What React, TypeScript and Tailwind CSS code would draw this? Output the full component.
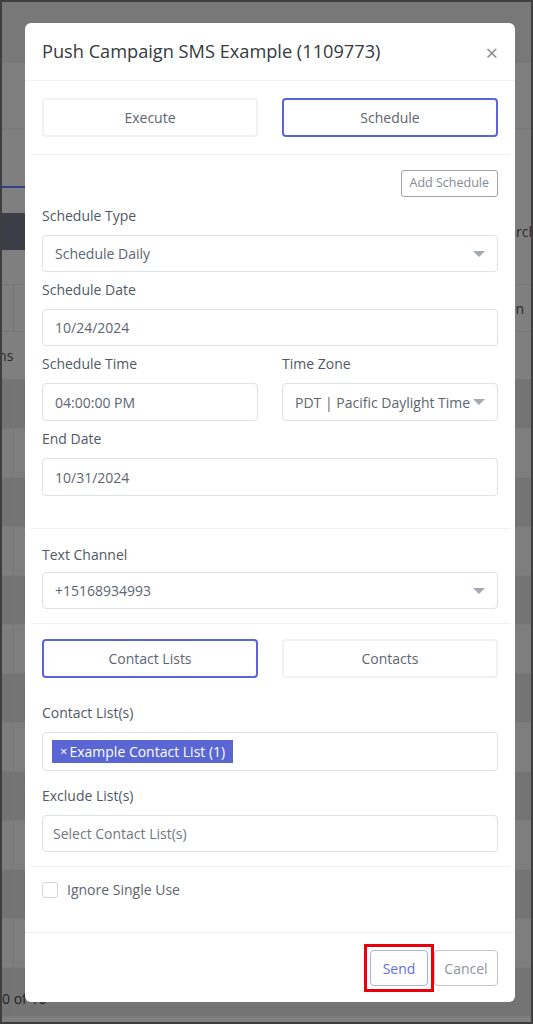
import type React from "react";

const Caret: React.FC = () => (
	<svg width="12" height="6" viewBox="0 0 12 6" className="shrink-0">
		<path d="M0 0h12L6 6z" fill="#a3a9b0" />
	</svg>
);

const Field: React.FC<{
	label: string;
	className?: string;
	tight?: boolean;
	children: React.ReactNode;
}> = ({ label, className, tight, children }) => (
	<div className={className}>
		<div
			className={
				tight
					? "mb-[7px] text-[14px] leading-5 text-[#4f5964]"
					: "mb-[9px] text-[14px] leading-5 text-[#4f5964]"
			}
		>
			{label}
		</div>
		{children}
	</div>
);

const Box: React.FC<{ caret?: boolean; tall?: boolean; children: React.ReactNode }> = ({
	caret,
	tall,
	children,
}) => (
	<div
		className={
			tall
				? "flex h-[38px] items-center justify-between rounded-[4px] border border-[#dee2e6] px-[12px]"
				: "flex h-[37px] items-center justify-between rounded-[4px] border border-[#dee2e6] px-[12px]"
		}
	>
		<span className="text-[14px] text-[#5c6570]">{children}</span>
		{caret && <Caret />}
	</div>
);

const Tab: React.FC<{ active?: boolean; label: string }> = ({ active, label }) => (
	<div
		className={
			active
				? "flex h-[39px] items-center justify-center rounded-[4px] border-2 border-[#5a66d6] text-[14px] text-[#5c6570]"
				: "flex h-[39px] items-center justify-center rounded-[4px] border-2 border-[#eef2f7] text-[14px] text-[#5c6570]"
		}
	>
		{label}
	</div>
);

const Divider: React.FC = () => <div className="mx-[5px] h-px bg-[#eef1f5]" />;

const rows = Array.from({ length: 13 }, (_, i) => i);

export default function App() {
	return (
		<div className="relative h-[1024px] w-[533px] overflow-hidden border-2 border-[#3e3e3e] bg-[#7f7f7f] font-['Open_Sans',sans-serif]">
			{/* dimmed page behind the modal */}
			<div className="flex flex-col">
				<div className="h-[61px] bg-[#787878]" />
				<div className="h-[66px] border-b border-[#777] bg-[#7e7e7e]" />
				<div className="flex h-[59px] flex-col justify-end">
					<div className="h-[2px] w-[120px] bg-[#33408a]" />
				</div>
				<div className="h-[25px]" />
				<div className="flex h-[37px] items-center">
					<div className="h-full w-[80px] bg-[#3b3e46]" />
					<span className="-mr-[6px] ml-auto text-[14px] text-[#2a2a2a]">Search</span>
				</div>
				<div className="h-[35px] border-b border-[#767676]" />
				<div className="flex h-[47px] items-center border-b border-[#767676]">
					<div className="h-full w-[12px] border-r border-[#767676]" />
					<span className="mr-[7px] ml-auto text-[14px] text-[#2a2a2a]">Action</span>
				</div>
				<div className="flex h-[48px] items-center border-b border-[#767676]">
					<span className="-ml-[61px] text-[14px] text-[#2a2a2a]">Campaigns</span>
				</div>
				{rows.map((i) => (
					<div
						key={i}
						className={
							i % 2 === 0
								? "flex h-[49px] border-b border-[#7a7a7a] bg-[#747474]"
								: "flex h-[49px] border-b border-[#7a7a7a] bg-[#7e7e7e]"
						}
					>
						<div className="h-full w-[12px] border-r border-[#777]" />
					</div>
				))}
			</div>
			<div className="absolute top-[986px] left-0 text-[14px] text-[#222]">0 of 10</div>

			{/* modal */}
			<div className="absolute top-[21px] left-[23px] w-[490px] rounded-[6px] bg-white">
				<div className="flex h-[58px] items-center justify-between border-b border-[#eef1f5] px-[17px]">
					<h2 className="text-[18.2px] text-[#343a40]">Push Campaign SMS Example (1109773)</h2>
					<span className="text-[22px] leading-none text-[#8a9096]">×</span>
				</div>

				<div className="grid grid-cols-2 gap-6 px-[17px] pt-[17px] pb-[17px]">
					<Tab label="Execute" />
					<Tab active label="Schedule" />
				</div>
				<Divider />

				<div className="flex flex-col px-[17px] pt-[15px] pb-[32px]">
					<div className="flex justify-end">
						<button
							type="button"
							className="h-[27px] rounded-[3px] border border-[#9aa1a9] px-[8px] text-[12.5px] text-[#838a92]"
						>
							Add Schedule
						</button>
					</div>
					<Field label="Schedule Type" className="mt-[9px]">
						<Box caret>Schedule Daily</Box>
					</Field>
					<Field label="Schedule Date" className="mt-[8px]">
						<Box>10/24/2024</Box>
					</Field>
					<div className="mt-[8px] grid grid-cols-2 gap-6">
						<Field label="Schedule Time">
							<Box tall>04:00:00 PM</Box>
						</Field>
						<Field label="Time Zone">
							<Box tall caret>
								PDT | Pacific Daylight Time
							</Box>
						</Field>
					</div>
					<Field label="End Date" className="mt-[8px]">
						<Box tall>10/31/2024</Box>
					</Field>
				</div>
				<Divider />

				<div className="px-[17px] pt-[16px] pb-[14px]">
					<Field label="Text Channel" tight>
						<Box caret>+15168934993</Box>
					</Field>
				</div>
				<Divider />

				<div className="flex flex-col px-[17px] pt-[15px] pb-[14px]">
					<div className="grid grid-cols-2 gap-6">
						<Tab active label="Contact Lists" />
						<Tab label="Contacts" />
					</div>
					<Field label="Contact List(s)" className="mt-[25px]">
						<div className="flex h-[39px] items-center rounded-[4px] border border-[#dee2e6] pl-[9px]">
							<span className="flex h-[23px] items-center gap-[2px] bg-[#5a66d4] px-[8px] text-[14px] text-white">
								<span className="text-[13px]">×</span>Example Contact List (1)
							</span>
						</div>
					</Field>
					<Field label="Exclude List(s)" className="mt-[15px]">
						<div className="flex h-[37px] items-center rounded-[4px] border border-[#dee2e6] pl-[10px] text-[14px] text-[#6f7780]">
							Select Contact List(s)
						</div>
					</Field>
				</div>
				<Divider />

				<div className="flex items-center gap-[9px] px-[17px] pt-[13px] pb-[33px]">
					<span className="h-[16px] w-[16px] rounded-[3px] border border-[#cfd4d9]" />
					<span className="text-[14px] leading-[19px] text-[#5c6570]">Ignore Single Use</span>
				</div>

				<div className="flex justify-end gap-[6px] border-t border-[#eef1f5] px-[17px] pt-[17px] pb-[16px]">
					<div className="relative">
						<button
							type="button"
							className="h-[36px] w-[58px] rounded-[4px] border border-[#aab0e6] text-[14px] text-[#6470d6]"
						>
							Send
						</button>
						<span className="pointer-events-none absolute -inset-[6px] border-[3px] border-[#e8000b]" />
					</div>
					<button
						type="button"
						className="h-[36px] w-[64px] rounded-[4px] border border-[#c3c8cd] text-[14px] text-[#8d949b]"
					>
						Cancel
					</button>
				</div>
			</div>
		</div>
	);
}
